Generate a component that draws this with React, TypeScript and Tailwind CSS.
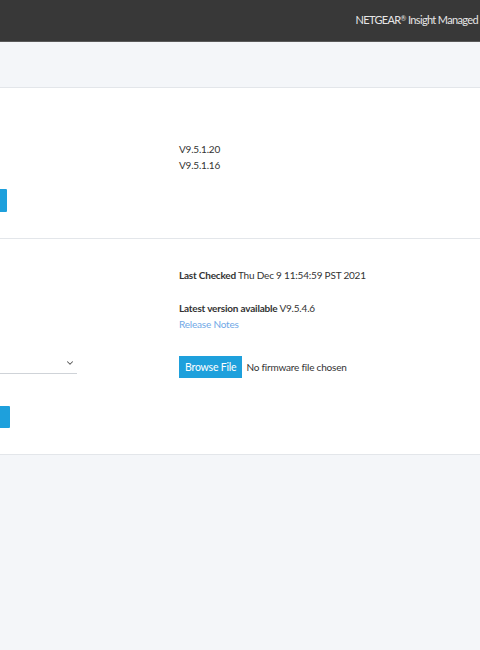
import { ChevronDown } from 'lucide-react';

const App = () => {
  return (
    <div className="min-h-screen bg-[#f4f6f9] text-[10px] tracking-[-0.2px] text-[#333] font-['Lato','Liberation_Sans',sans-serif]">
      <header className="h-[42px] bg-[#383838] border-b border-[#5a5a5a] flex items-center justify-end pr-[2px]">
        <span className="text-[11px] text-[#e6e6e6] tracking-[-0.65px]">
          NETGEAR<sup className="text-[7px]">®</sup> Insight Managed
        </span>
      </header>

      <div className="h-[46px] border-b border-[#e3e6ea]"></div>

      <section className="bg-white border-b border-[#e3e6ea] flex">
        <div className="w-[179px] pt-[101px] pb-[26px]">
          <button className="block w-[7px] h-[23px] bg-[#1ea0dc] rounded-r-[1px]"></button>
        </div>
        <div className="flex-1 pt-[53px] leading-[16px]">
          <p>V9.5.1.20</p>
          <p>V9.5.1.16</p>
        </div>
      </section>

      <section className="bg-white border-b border-[#e3e6ea] flex">
        <div className="w-[179px] pt-[114px] pb-[26px]">
          <div className="w-[77px] h-[21px] border-b border-[#cfd3d8] flex items-center justify-end pr-[2px]">
            <ChevronDown className="w-[10px] h-[10px] text-[#555]" strokeWidth={2.5} />
          </div>
          <button className="block mt-[32px] w-[10px] h-[22px] bg-[#1ea0dc] rounded-r-[1px]"></button>
        </div>
        <div className="flex-1 pt-[28px] leading-[16px]">
          <p>
            <span className="font-bold">Last Checked</span> Thu Dec 9 11:54:59 PST 2021
          </p>
          <p className="mt-[17px]">
            <span className="font-bold">Latest version available</span> V9.5.4.6
          </p>
          <a className="block text-[#6fa8e6]">Release Notes</a>
          <div className="mt-[24px] flex items-center gap-[4px]">
            <button className="h-[22px] px-[6px] bg-[#1ea0dc] text-white text-[10.5px]">Browse File</button>
            <span>No firmware file chosen</span>
          </div>
        </div>
      </section>
    </div>
  );
};

export default App;
